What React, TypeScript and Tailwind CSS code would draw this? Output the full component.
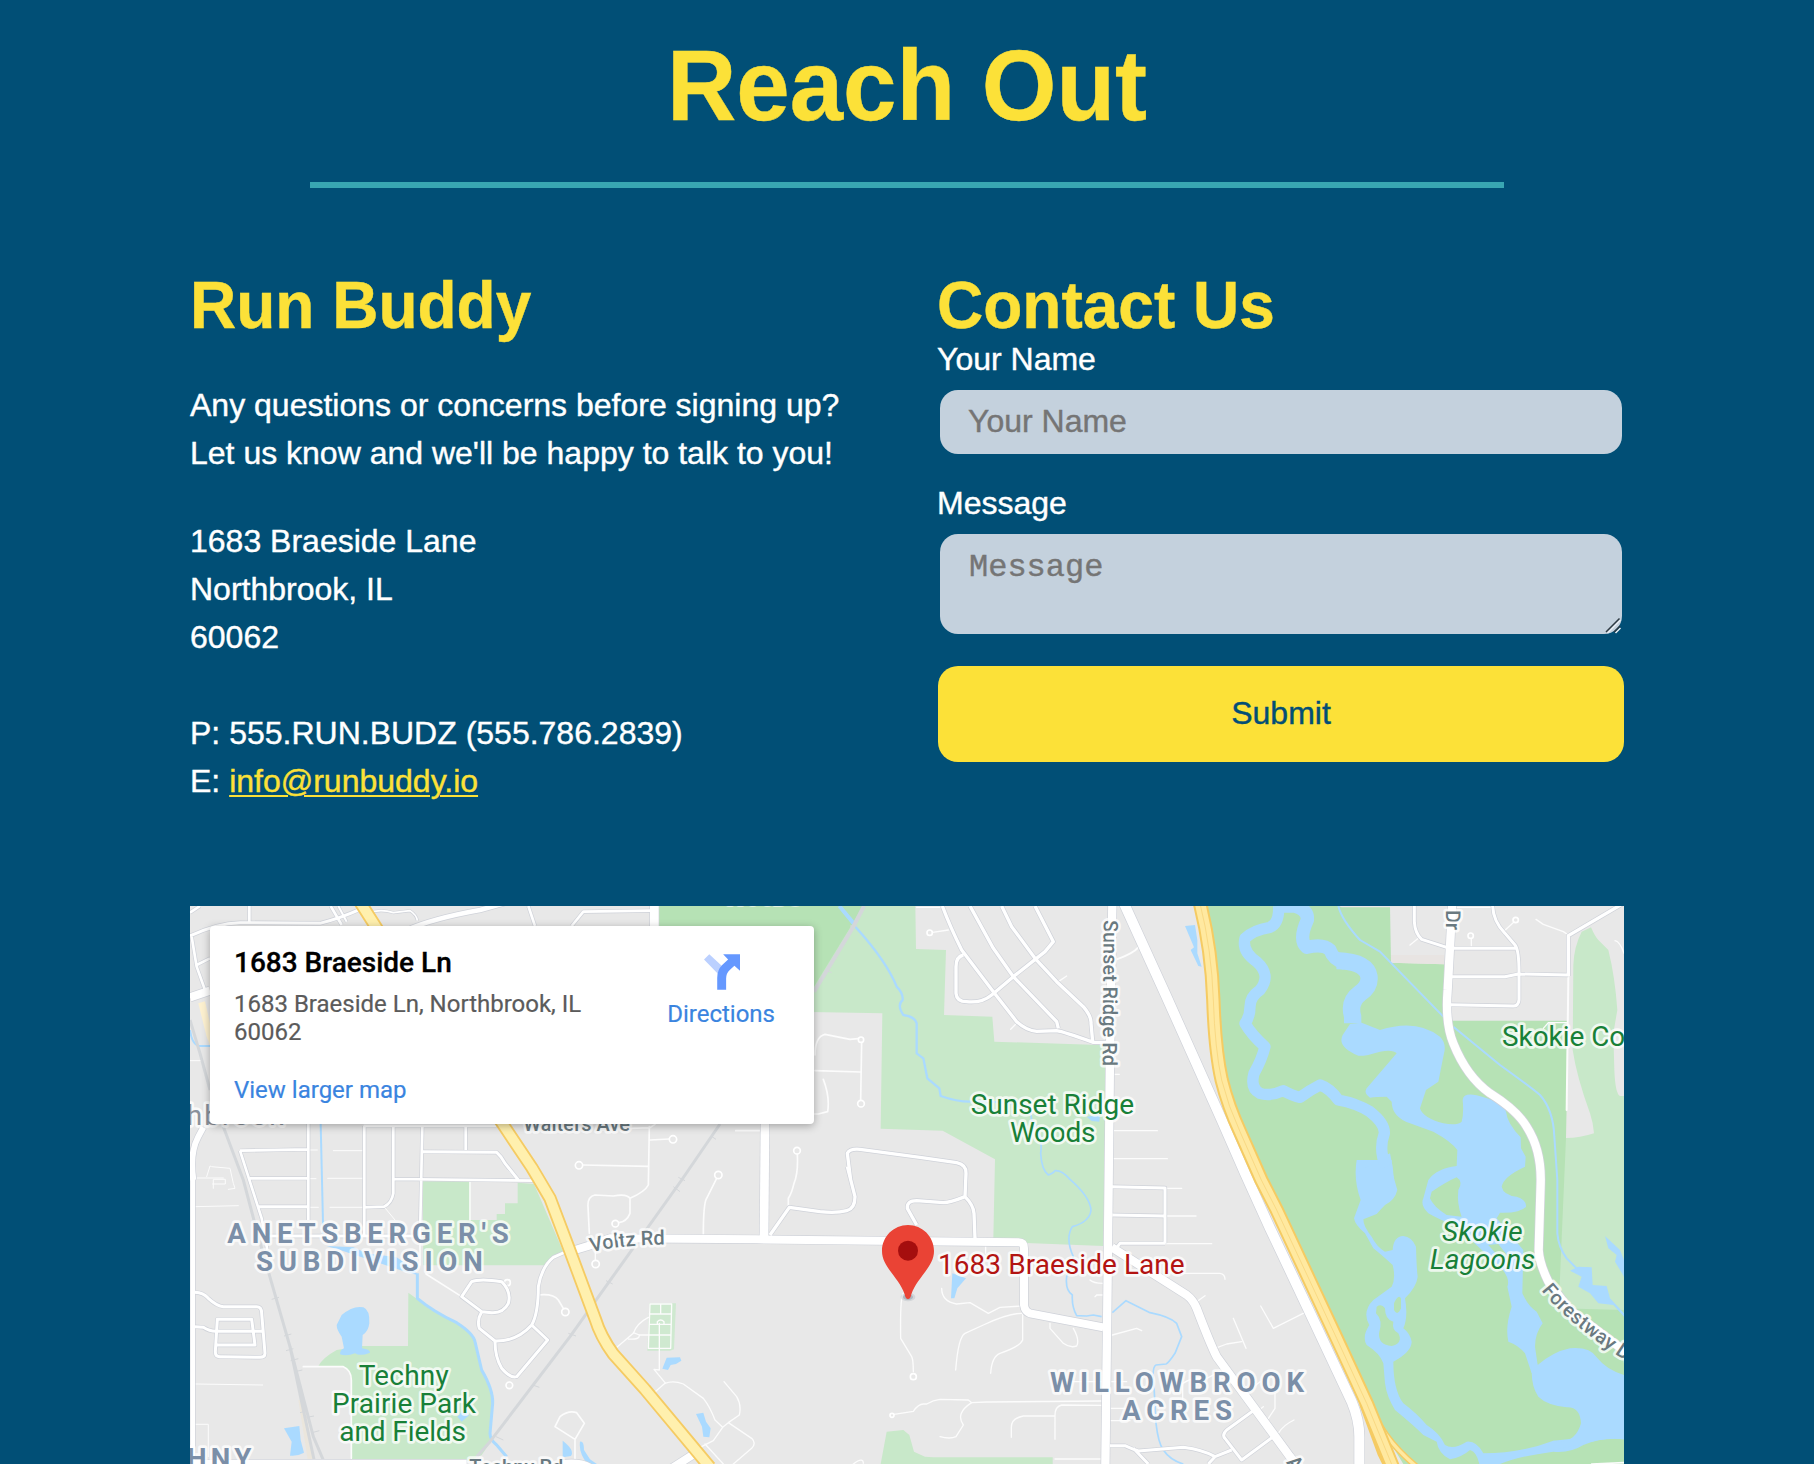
import React from 'react';

type Tile = 'a' | 'b' | 'c' | 'd' | 'e' | 'f' | 'g' | 'h';

// Map sheets: each sheet has its own origin on the map grid (3 grid units per pixel).
const sheets: Record<Tile, string> = {
  a: 'translate(0 0)',
  b: 'translate(0 840)',
  c: 'translate(1170 0)',
  d: 'translate(1170 840)',
  e: 'translate(2220 0)',
  f: 'translate(2220 840)',
  g: 'translate(3270 0)',
  h: 'translate(3270 840)',
};

const GREEN = '#b6e2b5';
const LIGHT = '#c8e8c9';
const WATER = '#aadaff';
const LAND = '#e8e8e8';

const areas: [Tile, string, string][] = [
  ['b', LIGHT, 'M685 368L712 388L760 420L830 455L880 500L905 600L938 670L932 815L905 855L870 872H516V640Q514 600 490 590H414Q425 565 470 540L545 528H684Z'],
  ['b', LIGHT, 'M728 34H872V150H950V132H975V100H1013V38L1062 42L1150 245L1120 262L1095 286H730Z'],
  ['d', '#cfe9d0', 'M238 400H318L312 538L300 542H232Z'],
  ['d', LIGHT, 'M932 882L950 785L1000 780L1018 795L1032 845L1065 860L1090 862H1448V890H932Z'],
  ['c', GREEN, 'M267 48H882L732 310H267Z'],
  ['e', LIGHT, 'M-170 48H-14L-12 177L78 180L72 375L217 380L223 455L560 466L550 1068L300 1058L220 1045L225 808L68 722L-118 716L-113 370L-330 366V310Z'],
  ['g', GREEN, 'M-190 48L-160 300L-140 560L-100 700L-30 860L10 930L205 1340L290 1540L400 1722H1062V48Z'],
  ['g', LAND, 'M205 48H360V52H215ZM360 48L363 218L523 223L540 392H895L888 744H1062V48Z'],
  ['g', '#e8e4e2', 'M363 195H523V223L363 218Z'],
  ['g', LIGHT, 'M910 225Q912 170 935 125L963 112Q975 140 985 150L1015 180Q1035 260 1042 360L1030 430L1033 540Q1036 612 1050 618H1062V1260L866 1255L888 744Q930 744 972 730Q970 700 960 670Q920 560 908 480Z'],
  ['b', '#ebe6dc', 'M355 690H372L405 882H385Z'],
  ['a', '#fdf1d0', 'M55 340L75 334L90 400V465L80 440Z'],
  ['g', WATER, 'M240 402L275 398L330 420Q440 385 510 440Q530 460 522 490L505 575L468 600L450 655Q460 685 520 700Q560 708 575 695Q582 670 578 630Q580 608 620 616Q700 635 708 665Q712 700 752 742L753 775L767 800L765 830Q700 860 695 890Q700 915 740 920Q770 930 768 950Q750 970 690 968L680 985L760 1080L757 1210Q775 1250 800 1265L818 1300Q795 1330 795 1370L803 1425L785 1450L765 1390Q745 1365 715 1355Q705 1310 725 1250L712 1190Q722 1165 690 1130L560 1010Q500 985 475 970Q450 945 460 925L475 870Q500 835 560 828L562 780Q545 755 490 725L420 700Q365 680 365 635L350 620Q320 620 300 623Q280 610 290 595L380 490Q370 478 330 485Q280 500 265 497Q200 470 218 435Z'],
  ['h', GREEN, 'M485 65Q530 35 560 22Q580 35 565 60Q560 100 575 140L530 135Q490 110 480 85Z'],
  ['h', GREEN, 'M655 225L685 222L715 260L712 275L690 265Z'],
  ['h', WATER, 'M260 -30Q250 30 272 90L252 145Q255 165 285 190L310 235Q335 255 368 285Q378 325 365 350L310 390Q275 425 298 465Q275 500 290 525Q330 550 340 580L345 640Q350 680 375 720Q430 765 460 795L500 815Q505 850 540 868Q575 862 600 840Q620 845 628 882H690Q740 860 850 845Q900 850 940 825Q1000 800 1062 808V790L850 812Q750 850 640 850Q620 812 590 815Q550 840 525 825Q510 790 470 765Q440 730 400 700Q370 660 370 575Q425 545 425 515Q420 490 400 475Q415 440 405 385Q440 350 443 320Q440 300 438 230Q425 200 400 198Q370 200 368 240L345 245Q320 230 305 200Q280 170 280 148L320 132Q335 115 345 105Q375 90 382 60L365 0V-30Z'],
  ['h', GREEN, 'M320 410Q335 400 345 415Q345 450 370 455Q365 480 385 490Q400 520 365 528Q325 525 327 490Q340 450 318 430Z'],
  ['h', GREEN, 'M372 400Q385 370 393 385L393 415Q382 440 372 420Z'],
  ['h', WATER, 'M803 585Q850 545 900 535Q960 530 980 562Q1010 600 1062 615V808Q1000 802 940 822L850 840V812Q915 825 933 760Q930 710 890 712Q830 705 805 680Q785 650 785 605L785 560Z'],
  ['g', WATER, 'M258 870Q255 840 310 825L332 805L360 790Q370 830 372 870Z'],
  ['h', WATER, 'M900 302L925 290L965 292L968 345L1010 348L1020 385L1062 430V440L1030 405L985 400L960 370L925 350L935 320Z'],
  ['h', WATER, 'M1005 198L1050 240L1062 270V320L1035 275L1040 255L1015 235Z'],
  ['e', WATER, 'M795 108L825 105L832 150V190L845 230L835 228L812 180L822 172Z'],
  ['e', WATER, 'M500 680L540 675L538 695L515 693Z'],
  ['f', WATER, 'M97 310L138 325L112 355L103 385L93 385Z'],
  ['b', WATER, 'M485 435Q520 405 550 412Q570 420 568 460Q565 485 548 495L546 535Q570 538 570 548Q540 560 525 550Q500 560 480 553Q480 540 492 535L485 500Q470 480 470 465Z'],
  ['b', WATER, 'M312 775L358 768L362 810L372 848Q350 860 330 857L335 815Z'],
  ['b', WATER, 'M832 740L850 720L868 735L845 755Z'],
  ['b', WATER, 'M1148 812Q1185 840 1173 858L1148 862Z'],
  ['b', WATER, 'M440 228L520 232L560 250L650 262L705 300L712 315L660 300L600 280L480 240Z'],
  ['d', WATER, 'M290 563L330 562L334 572L318 582L302 585L294 600L277 596Z'],
  ['d', WATER, 'M378 732L400 728L408 755L422 775L418 802L400 800L396 770Z'],
  ['d', WATER, 'M30 815Q42 812 42 840L60 868L85 885H55Q25 850 30 815Z'],
];

const streams: [Tile, number, string][] = [
  ['g', 34, 'M26 48Q28 100 0 112Q-50 120 -75 145Q-85 185 -40 215Q5 255 -30 300Q-60 320 -60 350Q-60 380 -75 400Q-55 435 -15 470Q-25 510 -48 550Q-60 595 -30 610Q0 620 40 602Q70 618 90 622Q120 600 150 585Q180 595 205 630Q260 640 300 665Q345 700 343 730Q325 780 348 830'],
  ['g', 40, 'M20 48H75Q115 60 112 90Q85 150 110 172Q160 160 180 180Q190 210 225 220'],
  ['g', 52, 'M200 212Q290 215 297 260Q300 290 270 310Q235 335 248 380V400'],
  ['g', 6, 'M205 48Q215 90 270 150L330 185L520 380M550 410L690 525Q780 590 810 615Q850 660 853 740L862 870V1030Q865 1070 890 1105L925 1140'],
  ['c', 7, 'M808 48L860 115Q950 215 980 290Q1000 310 998 330Q980 345 1000 375Q1035 380 1040 400V490L1060 505L1072 565L1108 595L1112 618Q1160 635 1200 635'],
  ['c', 12, 'M808 48L855 105'],
  ['e', 5, 'M150 635Q220 630 330 650L335 690Q370 730 362 790Q365 840 385 855Q400 850 405 842Q425 840 450 868Q510 920 513 960Q510 995 457 1010Q435 1045 460 1100L440 1160Q435 1200 457 1215Q455 1250 470 1277L500 1278L520 1275L545 1280M577 1268L618 1232L690 1268Q750 1280 770 1300L785 1340L765 1390Q745 1420 738 1422L708 1425Q695 1430 702 1490L708 1600Q715 1660 730 1680Q750 1710 790 1722'],
  ['b', 6, 'M422 -138L430 200'],
  ['b', 9, 'M712 310V385Q760 425 830 458Q880 490 885 515L905 600Q940 660 938 700L930 790Q930 810 950 825L980 860'],
  ['a', 6, 'M30 420Q35 460 55 468H90'],
];

const rails: [Tile, number, string][] = [
  ['a', 9, 'M30 390L60 490L90 600M130 710L190 870L235 1040L330 1370L400 1640L435 1722M330 1370L370 1560L405 1722'],
  ['c', 12, 'M882 48L850 110L732 305'],
  ['c', 9, 'M450 702L335 870L0 1340L-240 1655L-280 1700'],
  ['c', 3, 'M840 108H862M765 238L785 248M423 738L438 748M325 862L345 872M310 890L330 905M108 1172L128 1182M-5 1330L18 1338M-112 1485L-92 1492M-222 1640L-200 1650'],
  ['b', 3, 'M275 388L297 382M312 498L334 492M318 542L340 536M332 572L355 566M345 605L367 600M360 728L382 722M380 742L402 738M396 788L418 782'],
];

const roads: [Tile, number, string][] = [
  ['a', 8, 'M208 48V98M30 68L60 48M35 140L50 230L75 300M50 225L90 205M452 48L485 105'],
  ['a', 9, 'M30 138Q110 100 180 98L420 100Q480 85 540 58'],
  ['a', 6, 'M475 48L500 95'],
  ['a', 25, 'M30 322L90 302'],
  ['a', 5, 'M560 70Q600 55 640 68L690 62Q710 75 712 92'],
  ['a', 14, 'M680 120Q760 85 900 60L990 35'],
  ['a', 8, 'M1045 48L1065 108M1175 108L1210 65L1410 62'],
  ['c', 26, 'M253 48V108'],
  ['a', 8, 'M180 782L385 778M385 702V990M180 782L245 985L262 1080M553 708V1040M640 710V910Q635 940 612 950L550 952M727 710L720 1040M857 710V780M210 865H385M640 867L1070 872'],
  ['a', 9, 'M727 785L950 787Q965 800 975 820L1015 870M550 707H950M235 950H385M265 1038H700'],
  ['a', 18, 'M40 870Q28 790 55 740L70 712'],
  ['b', 14, 'M38 0V882'],
  ['b', 9, 'M45 367Q70 368 85 385Q110 408 130 410H230Q245 410 245 430L255 550Q255 562 240 562L120 560Q106 560 106 545L112 448H215L225 525H108M45 470L70 472Q90 485 110 484H248'],
  ['b', 9, 'M905 425L845 380L875 335Q900 325 965 335Q995 365 985 400Q970 430 935 428L905 425Q890 450 898 475L945 513Q1010 515 1055 465Q1075 430 1075 350Q1085 290 1120 262L1170 240M1055 465L1103 510L1010 620Q990 625 965 595Q945 560 945 515'],
  ['b', 18, 'M30 878H860'],
  ['d', 18, 'M-30 880Q30 872 60 890'],
  ['c', 26, 'M585 702L582 1045'],
  ['c', 10, 'M842 870L832 790Q840 775 870 778L1050 802L1160 818Q1190 825 1188 850L1185 920Q1140 938 1120 938L1040 932Q1010 932 1012 955L1040 1005M1185 920Q1210 945 1212 970L1215 1045M832 830L855 920Q855 955 830 962Q800 970 750 965L658 952L600 1035'],
  ['d', 24, 'M15 240L80 220L120 205L560 208L1345 217Q1362 217 1362 235V405Q1365 425 1380 430L1600 472'],
  ['e', 10, 'M67 48Q90 110 125 180L220 305L290 395Q320 422 350 424L410 422Q430 425 520 457H560M150 48L220 175L280 260L410 395L415 415M245 48L275 110L345 205L410 275L490 350Q515 380 513 400L518 455M345 48L400 155L375 185L280 260L215 315Q185 340 140 335Q110 335 108 310V230Q108 200 130 195'],
  ['e', 30, 'M612 40L735 310L905 690L975 850L1050 1015L1180 1290L1295 1535Q1318 1590 1318 1640V1730'],
  ['f', 9, 'M575 50L735 54V220M577 135L735 138M585 240L600 220H735'],
  ['f', 25, 'M575 232L800 375Q820 390 830 415Q870 520 890 560L1110 860L1150 910'],
  ['f', 9, 'M1010 715L920 780Q905 795 915 805L965 870L1060 800M570 827H615Q640 838 655 843L790 832Q850 840 885 860L935 840M885 860L865 882M640 835L685 882'],
  ['e', 25, 'M577 40L570 500L562 1240L556 1730'],
  ['g', 25, 'M547 40L533 300Q525 400 550 460Q590 560 660 610Q740 660 770 710Q815 780 812 880L806 1080Q808 1120 835 1175L900 1260L1080 1395'],
  ['g', 9, 'M433 48V95Q435 130 455 148L530 172M545 175H740M668 48Q670 95 705 130L735 165Q748 180 747 260V330Q745 348 730 348L540 344M545 260H705L745 252L895 255'],
  ['g', 10, 'M895 258V137L1060 40'],
  ['d', 24, 'M305 895L375 850'],
];

const lanes: [Tile, number, string][] = [
  ['a', 3, 'M30 512H60M390 780H412M460 782H550M80 860L90 828L95 830L150 835L160 880L165 895L145 898M100 895V868H136V882H98'],
  ['b', 3, 'M390 26H408M443 25H550M385 112H415M450 112H550M45 24H130M45 110L175 107M45 642L248 645M45 763H85V860M612 110L645 150'],
  ['b', 5, 'M870 35V150M370 590H490Q514 600 514 630V865M738 312L845 380M1075 375Q1120 370 1135 390L1150 415M1185 808V875M1125 770L1140 740Q1165 720 1190 728L1213 760L1185 808ZM985 0L1010 28M720 200V285'],
  ['c', 5, 'M240 750L298 747M38 825L235 829M238 710L235 885Q225 905 180 925Q170 910 130 918L75 915Q52 920 54 950L58 1030M180 925V970Q170 995 146 998M180 715L240 713L255 703M497 722H572M682 794Q685 850 672 880Q665 910 655 925V950M735 495Q735 440 765 433L840 448L872 445M875 455L872 630M735 542L872 546M760 568Q780 620 773 665L745 672H732M400 1035Q400 940 410 925L440 865'],
  ['d', 4, 'M76 240V270M137 535L190 490Q200 460 235 442M175 507Q210 510 208 495L190 488M208 495H300M268 460V600L252 598L285 638M252 668L285 640Q310 630 340 642L400 685Q420 710 435 750L458 772L430 812L390 832M462 635L500 680Q515 705 508 735L475 758L458 772M475 758L545 805Q560 820 545 835L490 882M405 822L460 882M240 402H305L302 535H235ZM272 402V432M238 432H303M238 463H303M262 463V455Q272 445 282 455V463'],
  ['d', 4, 'M1000 370Q990 380 992 505L1025 560Q1030 570 1030 605M972 733L1030 724Q1045 702 1060 702H1070Q1090 690 1110 688L1195 690L1205 698L1250 696L1600 693M850 882Q880 860 880 880'],
  ['e', 4, 'M-10 52H65M38 127L85 120M415 275L440 258M272 418L290 400M580 722H712M580 806H742M580 553H598'],
  ['e', 6, 'M590 208Q640 190 655 172'],
  ['f', 4, 'M155 698Q105 730 130 765L108 800Q90 808 60 800M550 706L425 705Q405 710 405 735V808M405 738L310 738Q272 745 274 775V802M405 867H550M65 355Q65 395 110 402L150 398L205 430L240 412L305 408M305 430Q265 430 190 465L135 490Q115 500 107 600M308 430V510Q300 530 240 550Q215 560 212 610M390 460V475L430 520Q450 535 470 528Q480 510 460 475M197 230V250M510 330Q520 340 550 340M525 380L530 375H550M577 495L650 475L665 482M450 635H620M570 715H650M570 752H630'],
  ['f', 4, 'M735 55H785M735 138H828M735 221H875M780 310H900Q915 312 915 328M830 395L855 377M885 535L920 522L965 515M940 445L978 535M1022 408L1060 475L1160 425M1065 670V715L1045 745M788 720V640Q820 620 860 625L900 605M1020 635L990 660M1030 710L1010 725M1075 790Q1090 765 1122 750'],
  ['g', 4, 'M420 165L445 145M700 125L732 96M604 147V172M560 52H665M820 415L835 398H890M1035 152Q1050 155 1062 190M895 135L880 125L820 103L798 88'],
  ['g', 6, 'M895 260L890 660'],
  ['h', 5, 'M965 882L1062 878'],
];

const culDeSacs: [Tile, number, number, number][] = [
  ['b', 1156, 426, 11], ['b', 988, 646, 10], ['b', 982, 338, 9], ['c', 309, 748, 11], ['c', 27, 826, 11], ['c', 445, 855, 11],
  ['c', 681, 782, 10], ['c', 873, 449, 8], ['c', 873, 641, 10], ['d', 136, 161, 10], ['d', 77, 282, 11],
  ['d', 1030, 620, 9], ['d', 966, 736, 6], ['e', 29, 128, 8], ['g', 737, 90, 8], ['g', 602, 137, 8],
];

const westHighway =
  'M540 36L600 130L960 690L1055 832L1110 925L1165 1070L1245 1285Q1262 1340 1300 1392L1395 1498L1590 1732';
const eastHighway =
  'M840 40Q875 180 880 330Q885 480 905 570Q925 650 960 725L1024 870L1070 960L1250 1345L1340 1540L1418 1730';

interface Label {
  tile: Tile;
  x: number;
  y: number;
  w: number;
  size: number;
  text: string;
  cls: string;
}

const park = 'fill-[#188038] font-normal';
const area = 'fill-[#7b8fa8] font-bold';
const road = 'fill-[#697980] font-medium';

const labels: Label[] = [
  { tile: 'b', x: 142, y: 218, w: 844, size: 83, text: "ANETSBERGER'S", cls: area },
  { tile: 'b', x: 228, y: 302, w: 680, size: 83, text: 'SUBDIVISION', cls: area },
  { tile: 'f', x: 390, y: 665, w: 762, size: 83, text: 'WILLOWBROOK', cls: area },
  { tile: 'f', x: 606, y: 749, w: 330, size: 83, text: 'ACRES', cls: area },
  { tile: 'b', x: -170, y: 893, w: 384, size: 83, text: 'TECHNY', cls: area },
  { tile: 'a', x: -170, y: 706, w: 480, size: 84, text: 'Northbrook', cls: 'fill-[#8a919b] font-normal' },
  { tile: 'b', x: 536, y: 645, w: 270, size: 84, text: 'Techny', cls: park },
  { tile: 'b', x: 456, y: 730, w: 432, size: 84, text: 'Prairie Park', cls: park },
  { tile: 'b', x: 478, y: 812, w: 380, size: 84, text: 'and Fields', cls: park },
  { tile: 'e', x: 152, y: 671, w: 490, size: 84, text: 'Sunset Ridge', cls: park },
  { tile: 'e', x: 270, y: 755, w: 256, size: 84, text: 'Woods', cls: park },
  { tile: 'g', x: 696, y: 467, w: 370, size: 84, text: 'Skokie Co', cls: park },
  { tile: 'h', x: 516, y: 212, w: 242, size: 84, text: 'Skokie', cls: 'fill-[#188038] italic' },
  { tile: 'h', x: 480, y: 296, w: 316, size: 84, text: 'Lagoons', cls: 'fill-[#188038] italic' },
  { tile: 'a', x: 1030, y: 722, w: 320, size: 60, text: 'Walters Ave', cls: road },
  { tile: 'b', x: 868, y: 912, w: 282, size: 60, text: 'Techny Rd', cls: road },
  { tile: 'c', x: 460, y: 43, w: 240, size: 82, text: 'WOODS', cls: area },
];

const halo = 'stroke-white/75 stroke-[16px] [paint-order:stroke] [stroke-linejoin:round]';

function MapCanvas() {
  return (
    <svg
      className="block h-[558px] w-[1434px] font-[Roboto,sans-serif]"
      viewBox="30 48 4302 1674"
      preserveAspectRatio="none"
      fill="none"
      strokeLinejoin="round"
    >
      <rect x="30" y="48" width="4302" height="1674" fill={LAND} />
      {areas.map(([t, fill, d], i) => (
        <path key={i} transform={sheets[t]} d={d} fill={fill} />
      ))}
      {streams.map(([t, w, d], i) => (
        <path key={i} transform={sheets[t]} d={d} stroke={WATER} strokeWidth={w} />
      ))}
      {rails.map(([t, w, d], i) => (
        <path key={i} transform={sheets[t]} d={d} stroke="#d4d7da" strokeWidth={w} />
      ))}
      {lanes.map(([t, w, d], i) => (
        <path key={i} transform={sheets[t]} d={d} stroke="#fcfcfc" strokeWidth={w} strokeLinecap="round" />
      ))}
      {culDeSacs.map(([t, x, y, r], i) => (
        <circle key={i} transform={sheets[t]} cx={x} cy={y} r={r} fill={LAND} stroke="#fff" strokeWidth="5" />
      ))}
      {roads.map(([t, w, d], i) => (
        <path key={i} transform={sheets[t]} d={d} stroke="#cfd2d9" strokeWidth={w + 4} />
      ))}
      {roads.map(([t, w, d], i) => (
        <path key={i} transform={sheets[t]} d={d} stroke="#fff" strokeWidth={w} />
      ))}
      <path d={westHighway} stroke="#f5cb63" strokeWidth="40" />
      <path d={westHighway} stroke="#fff0ae" strokeWidth="29" />
      <g transform={sheets.h}>
        <path d="M280 700L335 850L355 890" stroke="#f5cb63" strokeWidth="26" />
        <path d="M295 690Q330 800 440 890" stroke="#f5cb63" strokeWidth="18" />
        <path d="M295 690Q330 800 440 890M280 700L335 850L355 890" stroke="#ffe9a0" strokeWidth="10" />
      </g>
      <g transform={sheets.e}>
        <path d={eastHighway} stroke="#f5cb63" strokeWidth="43" />
        <path d={eastHighway} stroke="#ffe9a0" strokeWidth="31" />
        <path d={eastHighway} stroke="#f9d984" strokeWidth="3" />
      </g>
      {labels.map((l) => (
        <text
          key={l.text}
          transform={sheets[l.tile]}
          x={l.x}
          y={l.y}
          fontSize={l.size}
          textLength={l.w}
          className={`${l.cls} ${halo}`}
        >
          {l.text}
        </text>
      ))}
      <g transform={sheets.e}>
        <text transform="translate(551 90) rotate(90.4)" fontSize="60" textLength="438" className={`${road} ${halo}`}>
          Sunset Ridge Rd
        </text>
      </g>
      <g transform={sheets.g}>
        <text transform="translate(528 60) rotate(90.5)" fontSize="61" textLength="60" className={`${road} ${halo}`}>
          Dr
        </text>
      </g>
      <g transform={sheets.h}>
        <path id="forestway" d="M814 362Q900 470 1110 600" />
        <text fontSize="60" className={`${road} ${halo}`}>
          <textPath href="#forestway">Forestway Dr</textPath>
        </text>
        <text transform="translate(47 877) rotate(52)" fontSize="60" className={`${road} ${halo}`}>
          Ave
        </text>
      </g>
      <g transform={sheets.d}>
        <path id="voltz" d="M64 247Q150 224 300 224" />
        <text fontSize="60" className={`${road} ${halo}`}>
          <textPath href="#voltz" textLength="222">
            Voltz Rd
          </textPath>
        </text>
        <ellipse cx="1014" cy="381" rx="22" ry="13" fill="#5c7288" opacity="0.15" />
        <ellipse cx="1014" cy="381" rx="15" ry="9" fill="#5c7288" opacity="0.3" />
        <path
          d="M1014 165c43 0 78 35 78 78c0 48-50 78-68 130q-2 14-10 14q-8 0-10-14c-18-52-68-82-68-130c0-43 35-78 78-78z"
          fill="#ea4335"
        />
        <circle cx="1014" cy="242" r="30" fill="#a50e0e" />
      </g>
      <g transform={sheets.f}>
        <text x="54" y="311" fontSize="84" textLength="740" className={`fill-[#b31412] ${halo}`}>
          1683 Braeside Lane
        </text>
      </g>
    </svg>
  );
}

function PlaceCard() {
  return (
    <div className="absolute top-5 left-5 flex h-[198px] w-[604px] justify-between rounded bg-white pr-[39px] pl-[24px] font-[Roboto,sans-serif] shadow-[0_2px_8px_rgba(0,0,0,0.3)]">
      <div className="pt-[20px]">
        <h3 className="text-[28px] leading-[33px] font-medium text-black [-webkit-text-stroke:0.3px]">
          1683 Braeside Ln
        </h3>
        <p className="mt-[11px] text-2xl leading-[28px] text-[#5b5b5b] [-webkit-text-stroke:0.2px]">
          1683 Braeside Ln, Northbrook, IL
          <br />
          60062
        </p>
        <a
          href="#map"
          className="mt-[30px] block text-2xl leading-[28px] text-[#3a84df] [-webkit-text-stroke:0.2px]"
        >
          View larger map
        </a>
      </div>
      <a
        href="#map"
        className="flex flex-col items-center pt-[28px] text-2xl leading-[28px] text-[#3a84df] [-webkit-text-stroke:0.2px]"
      >
        <svg className="mb-[10px] ml-px h-[36px] w-[36px]" viewBox="401 192 109 108">
          <path d="M401 208L417 192L458 230Q444 238 443 251Z" fill="#bbd0ff" />
          <path
            d="M441 300V264Q441 240 456 225L474 208L459 192H510V242L493 227L479 240Q468 250 468 266V300Z"
            fill="#6598ff"
          />
        </svg>
        Directions
      </a>
    </div>
  );
}

export default function App() {
  return (
    <main className="h-[1464px] w-[1814px] overflow-hidden bg-[#014f76] pt-[39px] font-['Liberation_Sans',Arial,sans-serif] text-[32px] text-white [-webkit-text-stroke:0.4px]">
      <h1 className="origin-[50%_81px] scale-y-105 text-center text-[96px] leading-none font-bold text-[#fce138]">
        Reach Out
      </h1>
      <div className="mx-auto mt-[47px] h-1.5 w-[1194px] bg-[#39a6b2]" />

      <section className="mx-auto mt-[86px] grid w-[1434px] grid-cols-[748px_686px]">
        <div>
          <h2 className="origin-[0_54px] scale-y-105 text-[64px] leading-none font-bold text-[#fce138]">Run Buddy</h2>
          <p className="mt-[43px] leading-[48px]">
            Any questions or concerns before signing up?
            <br />
            Let us know and we'll be happy to talk to you!
          </p>
          <address className="mt-10 leading-[48px] not-italic">
            1683 Braeside Lane
            <br />
            Northbrook, IL
            <br />
            60062
            <br />
            <br />
            P: 555.RUN.BUDZ (555.786.2839)
            <br />
            E:{' '}
            <a
              href="mailto:info@runbuddy.io"
              className="text-[#fce138] underline decoration-2 underline-offset-[3px]"
            >
              info@runbuddy.io
            </a>
          </address>
        </div>

        <form className="flex flex-col">
          <h2 className="-ml-px origin-[0_54px] scale-y-105 text-[64px] leading-none font-bold text-[#fce138]">
            Contact Us
          </h2>
          <label htmlFor="name" className="mt-[3px] -ml-px leading-[36px]">
            Your Name
          </label>
          <input
            id="name"
            placeholder="Your Name"
            className="mx-0.5 mt-[13px] h-16 rounded-[18px] bg-[#c4d1dd] pr-7 pb-[2px] pl-[28px] placeholder:text-[#757575]"
          />
          <label htmlFor="message" className="mt-[31px] -ml-px leading-[36px]">
            Message
          </label>
          <div className="relative mx-0.5 mt-[13px] h-[100px]">
            <textarea
              id="message"
              placeholder="Message"
              className="block h-full w-full resize-none rounded-[18px] bg-[#c4d1dd] pt-[16px] pr-7 pl-[29px] font-['Liberation_Mono',monospace] leading-[36px] placeholder:text-[#757575]"
            />
            <svg className="absolute right-0 bottom-0 h-[18px] w-[18px]" viewBox="0 0 18 18" fill="none">
              <path d="M3.500 17L16.500 4M11.500 17L16.500 12" stroke="#e9eef3" strokeWidth="1.500" />
              <path d="M2 16L15.500 2.500M10 16L16 10" stroke="#2e3a42" strokeWidth="1.500" />
            </svg>
          </div>
          <button type="button" className="mt-8 h-24 rounded-[20px] bg-[#fce138] pb-0.5 text-[#024e76]">
            Submit
          </button>
        </form>
      </section>

      <section
        id="map"
        className="relative mx-auto mt-[101px] h-[558px] w-[1434px] overflow-hidden [-webkit-text-stroke:0]"
      >
        <MapCanvas />
        <PlaceCard />
      </section>
    </main>
  );
}
